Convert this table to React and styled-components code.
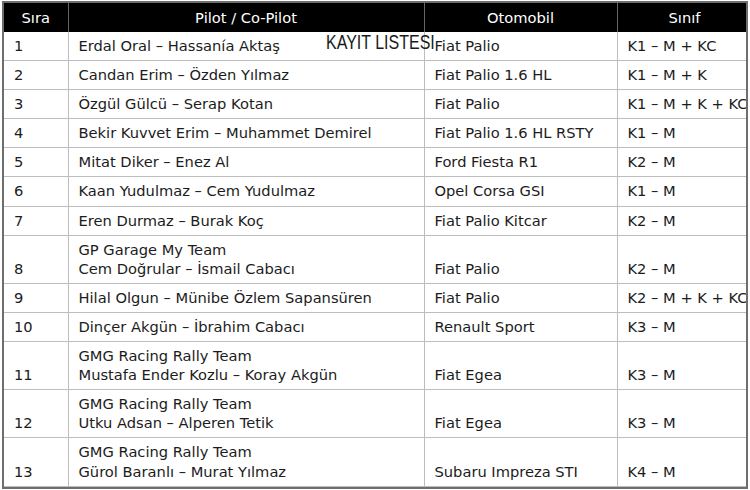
import React from "react";
import styled, { createGlobalStyle } from "styled-components";

const rows = [
  { no: 1, pilot: ["Erdal Oral – Hassanía Aktaş"], car: "Fiat Palio", cls: "K1 – M + KC" },
  { no: 2, pilot: ["Candan Erim – Özden Yılmaz"], car: "Fiat Palio 1.6 HL", cls: "K1 – M + K" },
  { no: 3, pilot: ["Özgül Gülcü – Serap Kotan"], car: "Fiat Palio", cls: "K1 – M + K + KC" },
  { no: 4, pilot: ["Bekir Kuvvet Erim – Muhammet Demirel"], car: "Fiat Palio 1.6 HL RSTY", cls: "K1 – M" },
  { no: 5, pilot: ["Mitat Diker – Enez Al"], car: "Ford Fiesta R1", cls: "K2 – M" },
  { no: 6, pilot: ["Kaan Yudulmaz – Cem Yudulmaz"], car: "Opel Corsa GSI", cls: "K1 – M" },
  { no: 7, pilot: ["Eren Durmaz – Burak Koç"], car: "Fiat Palio Kitcar", cls: "K2 – M" },
  { no: 8, pilot: ["GP Garage My Team", "Cem Doğrular – İsmail Cabacı"], car: "Fiat Palio", cls: "K2 – M" },
  { no: 9, pilot: ["Hilal Olgun – Münibe Özlem Sapansüren"], car: "Fiat Palio", cls: "K2 – M + K + KC" },
  { no: 10, pilot: ["Dinçer Akgün – İbrahim Cabacı"], car: "Renault Sport", cls: "K3 – M" },
  { no: 11, pilot: ["GMG Racing Rally Team", "Mustafa Ender Kozlu – Koray Akgün"], car: "Fiat Egea", cls: "K3 – M" },
  { no: 12, pilot: ["GMG Racing Rally Team", "Utku Adsan – Alperen Tetik"], car: "Fiat Egea", cls: "K3 – M" },
  { no: 13, pilot: ["GMG Racing Rally Team", "Gürol Baranlı – Murat Yılmaz"], car: "Subaru Impreza STI", cls: "K4 – M" },
];

const App = () => {
  return (
    <>
      <GlobalStyle />
      <Frame>
        <Table>
          <colgroup>
            <col style={{ width: 64 }} />
            <col style={{ width: 356 }} />
            <col style={{ width: 193 }} />
            <col style={{ width: 135 }} />
          </colgroup>
          <thead>
            <tr>
              <Th>Sıra</Th>
              <Th>Pilot / Co-Pilot</Th>
              <Th>Otomobil</Th>
              <Th>Sınıf</Th>
            </tr>
          </thead>
          <tbody>
            {rows.map((row) => (
              <tr key={row.no}>
                <Td>{row.no}</Td>
                <Td>
                  {row.pilot.map((line, i) => (
                    <Line key={i}>{line}</Line>
                  ))}
                </Td>
                <Td>{row.car}</Td>
                <Td>{row.cls}</Td>
              </tr>
            ))}
          </tbody>
        </Table>
        <Stamp>KAYIT LISTESI</Stamp>
      </Frame>
    </>
  );
};

const GlobalStyle = createGlobalStyle`
  body {
    margin: 0;
    background: #ffffff;
    font-family: "DejaVu Sans", "Noto Sans", sans-serif;
  }
`;

const Frame = styled.div`
  position: relative;
  margin: 1px 2px 0 2px;
  width: 746px;
  box-sizing: border-box;
  border: 2px solid #6e6e6e;
  overflow: hidden;
`;

const Table = styled.table`
  border-collapse: collapse;
  table-layout: fixed;
  width: 748px;
  font-size: 14.67px;
  color: #1c1c1c;
`;

const Th = styled.th`
  background: #000000;
  color: #ffffff;
  font-weight: normal;
  text-align: center;
  line-height: 19px;
  padding: 5px 10px 5px;
  border-right: 1px solid #666666;
  white-space: nowrap;
`;

const Td = styled.td`
  text-align: left;
  vertical-align: bottom;
  line-height: 19.1px;
  padding: 4px 10px 5px;
  border-right: 1px solid #bdbdbd;
  border-bottom: 1px solid #bdbdbd;
  white-space: nowrap;
`;

const Line = styled.div``;

const Stamp = styled.div`
  position: absolute;
  left: 322px;
  top: 28px;
  font-family: "Liberation Sans", Arial, sans-serif;
  font-size: 20px;
  color: #1a1a1a;
  transform: scaleX(0.8);
  transform-origin: left top;
  white-space: nowrap;
`;

export default App;
